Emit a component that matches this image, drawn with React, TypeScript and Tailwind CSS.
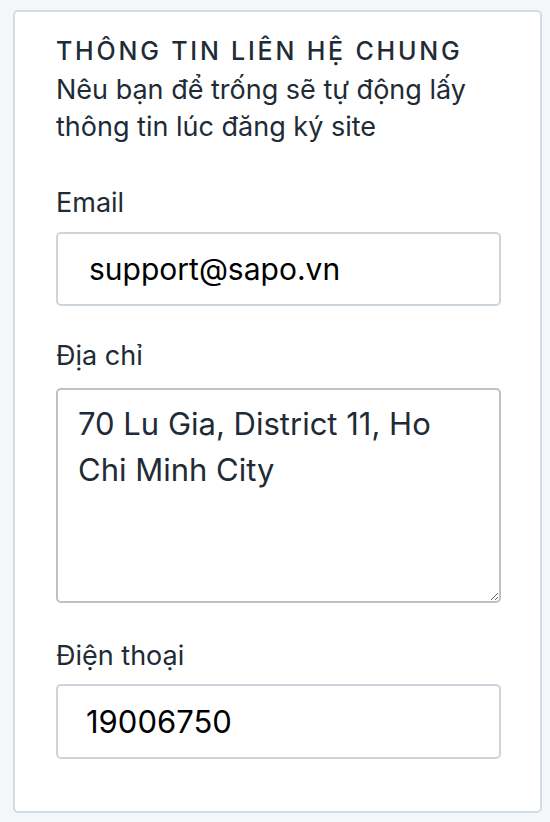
export default function App() {
    return (
        <div className="min-h-screen bg-[#f4f6f8] pl-[13px] pr-[8px] pt-[10px] pb-[10px]" style={{ fontFamily: 'Inter, "Noto Sans", sans-serif' }}>
            <div className="bg-white border-2 border-[#d3dce4] rounded-[5px] pl-[41px] pr-[39px] pt-[24px] pb-[52px]">
                {/* Header */}
                <h2 className="text-[25px] leading-[30px] font-medium tracking-[2.8px] text-[#212b36] uppercase mb-[5px]">
                    Thông tin liên hệ chung
                </h2>
                <p className="text-[27px] leading-[37px] text-[#212b36]">
                    Nêu bạn để trống sẽ tự động lấy thông tin lúc đăng ký site
                </p>

                {/* Email */}
                <label className="block mt-[41px] mb-[12px] text-[27px] leading-[34px] text-[#212b36]">Email</label>
                <input
                    type="text"
                    defaultValue="support@sapo.vn"
                    className="block w-full h-[74px] px-[31px] border-2 border-[#ccd5dd] rounded-[5px] text-[30px] text-black outline-none"
                />

                {/* Address */}
                <label className="block mt-[33px] mb-[15px] text-[27px] leading-[34px] text-[#212b36]">Địa chỉ</label>
                <textarea
                    defaultValue="70 Lu Gia, District 11, Ho Chi Minh City"
                    className="block w-full h-[215px] px-[20px] pt-[11px] border-2 border-[#b9c3cc] rounded-[5px] text-[31px] leading-[46px] text-[#212b36] outline-none"
                />

                {/* Phone */}
                <label className="block mt-[36px] mb-[11px] text-[27px] leading-[34px] text-[#212b36]">Điện thoại</label>
                <input
                    type="text"
                    defaultValue="19006750"
                    className="block w-full h-[75px] px-[28px] border-2 border-[#ccd5dd] rounded-[5px] text-[31px] text-black outline-none"
                />
            </div>
        </div>
    );
}
